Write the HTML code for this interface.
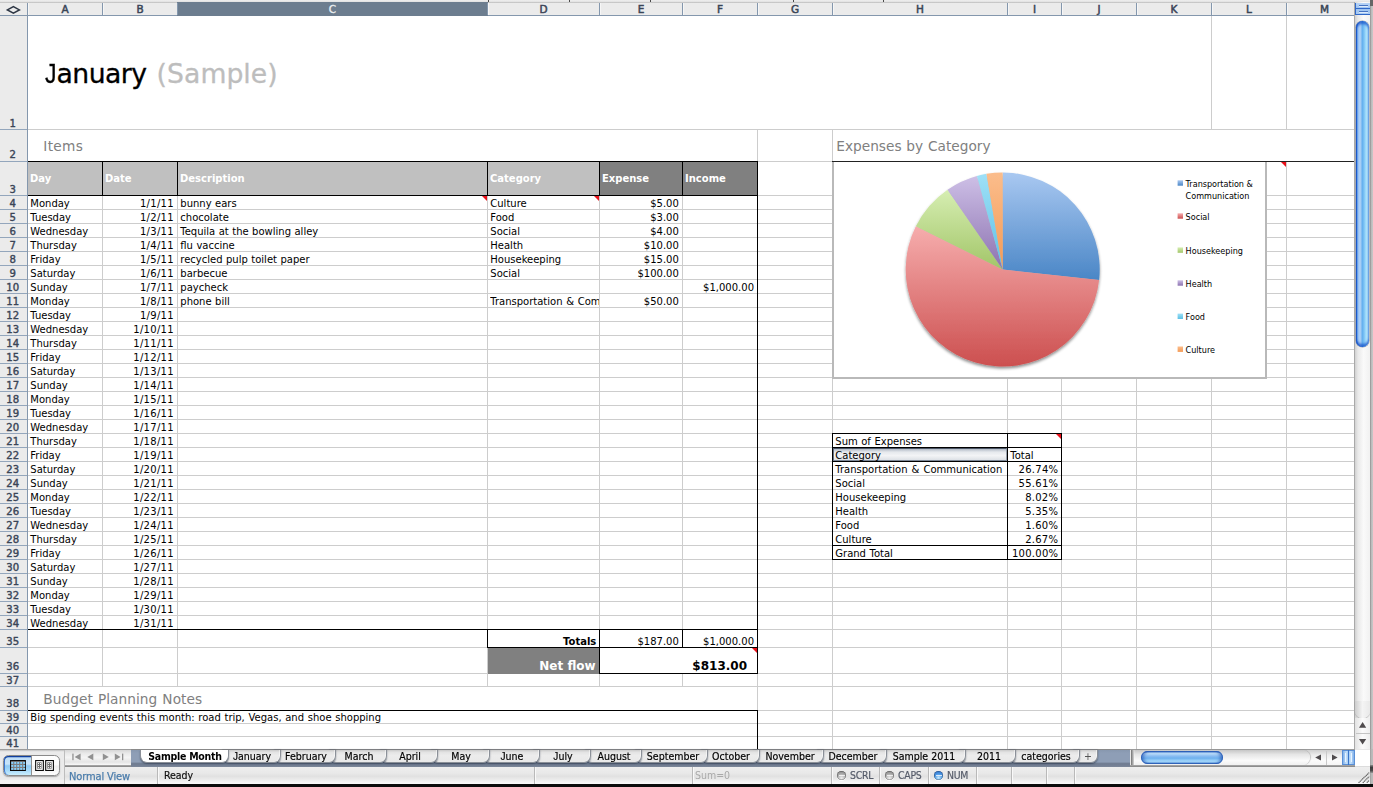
<!DOCTYPE html>
<html lang="en"><head><meta charset="utf-8"><title>January (Sample)</title>
<style>
html,body{margin:0;padding:0;background:#fff;}
#app{position:relative;width:1373px;height:787px;overflow:hidden;background:#fff;}
#app div,#app span.t,#app svg{position:absolute;}
.t{white-space:nowrap;display:block;}
.v{font-family:"DejaVu Sans","Liberation Sans",sans-serif;}
.l{font-family:"Liberation Sans","DejaVu Sans",sans-serif;}
</style></head><body><div id="app">

<!-- gridlines -->
<div style="left:28px;top:129px;width:1326px;height:1px;background:#cdcdcd;"></div>
<div style="left:28px;top:161px;width:1326px;height:1px;background:#cdcdcd;"></div>
<div style="left:28px;top:195px;width:1326px;height:1px;background:#cdcdcd;"></div>
<div style="left:28px;top:209px;width:1326px;height:1px;background:#cdcdcd;"></div>
<div style="left:28px;top:223px;width:1326px;height:1px;background:#cdcdcd;"></div>
<div style="left:28px;top:237px;width:1326px;height:1px;background:#cdcdcd;"></div>
<div style="left:28px;top:251px;width:1326px;height:1px;background:#cdcdcd;"></div>
<div style="left:28px;top:265px;width:1326px;height:1px;background:#cdcdcd;"></div>
<div style="left:28px;top:279px;width:1326px;height:1px;background:#cdcdcd;"></div>
<div style="left:28px;top:293px;width:1326px;height:1px;background:#cdcdcd;"></div>
<div style="left:28px;top:307px;width:1326px;height:1px;background:#cdcdcd;"></div>
<div style="left:28px;top:321px;width:1326px;height:1px;background:#cdcdcd;"></div>
<div style="left:28px;top:335px;width:1326px;height:1px;background:#cdcdcd;"></div>
<div style="left:28px;top:349px;width:1326px;height:1px;background:#cdcdcd;"></div>
<div style="left:28px;top:363px;width:1326px;height:1px;background:#cdcdcd;"></div>
<div style="left:28px;top:377px;width:1326px;height:1px;background:#cdcdcd;"></div>
<div style="left:28px;top:391px;width:1326px;height:1px;background:#cdcdcd;"></div>
<div style="left:28px;top:405px;width:1326px;height:1px;background:#cdcdcd;"></div>
<div style="left:28px;top:419px;width:1326px;height:1px;background:#cdcdcd;"></div>
<div style="left:28px;top:433px;width:1326px;height:1px;background:#cdcdcd;"></div>
<div style="left:28px;top:447px;width:1326px;height:1px;background:#cdcdcd;"></div>
<div style="left:28px;top:461px;width:1326px;height:1px;background:#cdcdcd;"></div>
<div style="left:28px;top:475px;width:1326px;height:1px;background:#cdcdcd;"></div>
<div style="left:28px;top:489px;width:1326px;height:1px;background:#cdcdcd;"></div>
<div style="left:28px;top:503px;width:1326px;height:1px;background:#cdcdcd;"></div>
<div style="left:28px;top:517px;width:1326px;height:1px;background:#cdcdcd;"></div>
<div style="left:28px;top:531px;width:1326px;height:1px;background:#cdcdcd;"></div>
<div style="left:28px;top:545px;width:1326px;height:1px;background:#cdcdcd;"></div>
<div style="left:28px;top:559px;width:1326px;height:1px;background:#cdcdcd;"></div>
<div style="left:28px;top:573px;width:1326px;height:1px;background:#cdcdcd;"></div>
<div style="left:28px;top:587px;width:1326px;height:1px;background:#cdcdcd;"></div>
<div style="left:28px;top:601px;width:1326px;height:1px;background:#cdcdcd;"></div>
<div style="left:28px;top:615px;width:1326px;height:1px;background:#cdcdcd;"></div>
<div style="left:28px;top:629px;width:1326px;height:1px;background:#cdcdcd;"></div>
<div style="left:28px;top:647px;width:1326px;height:1px;background:#cdcdcd;"></div>
<div style="left:28px;top:673px;width:1326px;height:1px;background:#cdcdcd;"></div>
<div style="left:28px;top:686px;width:1326px;height:1px;background:#cdcdcd;"></div>
<div style="left:28px;top:710px;width:1326px;height:1px;background:#cdcdcd;"></div>
<div style="left:28px;top:723px;width:1326px;height:1px;background:#cdcdcd;"></div>
<div style="left:28px;top:736px;width:1326px;height:1px;background:#cdcdcd;"></div>
<div style="left:28px;top:749px;width:1326px;height:1px;background:#cdcdcd;"></div>
<div style="left:102px;top:16px;width:1px;height:733px;background:#cdcdcd;"></div>
<div style="left:177px;top:16px;width:1px;height:733px;background:#cdcdcd;"></div>
<div style="left:487px;top:16px;width:1px;height:733px;background:#cdcdcd;"></div>
<div style="left:599px;top:16px;width:1px;height:733px;background:#cdcdcd;"></div>
<div style="left:682px;top:16px;width:1px;height:733px;background:#cdcdcd;"></div>
<div style="left:757px;top:16px;width:1px;height:733px;background:#cdcdcd;"></div>
<div style="left:832px;top:16px;width:1px;height:733px;background:#cdcdcd;"></div>
<div style="left:1007px;top:16px;width:1px;height:733px;background:#cdcdcd;"></div>
<div style="left:1061px;top:16px;width:1px;height:733px;background:#cdcdcd;"></div>
<div style="left:1136px;top:16px;width:1px;height:733px;background:#cdcdcd;"></div>
<div style="left:1211px;top:16px;width:1px;height:733px;background:#cdcdcd;"></div>
<div style="left:1286px;top:16px;width:1px;height:733px;background:#cdcdcd;"></div>
<div style="left:28px;top:16px;width:1183px;height:113px;background:#fff;"></div>
<div style="left:28px;top:130px;width:729px;height:31px;background:#fff;"></div>
<div style="left:833px;top:130px;width:521px;height:31px;background:#fff;"></div>
<div style="left:28px;top:687px;width:729px;height:23px;background:#fff;"></div>
<div style="left:28px;top:711px;width:729px;height:12px;background:#fff;"></div>
<div style="left:28px;top:724px;width:729px;height:12px;background:#fff;"></div>
<div style="left:28px;top:737px;width:729px;height:12px;background:#fff;"></div>
<!-- header row -->
<div style="left:28px;top:162px;width:571px;height:33px;background:#c0c0c0;"></div>
<div style="left:600px;top:162px;width:157px;height:33px;background:#808080;"></div>
<div style="left:27px;top:161px;width:731px;height:1px;background:#000;"></div>
<div style="left:27px;top:195px;width:731px;height:1px;background:#000;"></div>
<div style="left:102px;top:161px;width:1px;height:35px;background:#000;"></div>
<div style="left:177px;top:161px;width:1px;height:35px;background:#000;"></div>
<div style="left:487px;top:161px;width:1px;height:35px;background:#000;"></div>
<div style="left:599px;top:161px;width:1px;height:35px;background:#000;"></div>
<div style="left:682px;top:161px;width:1px;height:35px;background:#000;"></div>
<div style="left:757px;top:161px;width:1px;height:35px;background:#000;"></div>
<div style="left:757px;top:195px;width:1px;height:479px;background:#000;"></div>
<div style="left:27px;top:629px;width:731px;height:1px;background:#000;"></div>
<div style="left:487px;top:629px;width:1px;height:19px;background:#000;"></div>
<div style="left:599px;top:629px;width:1px;height:45px;background:#000;"></div>
<div style="left:682px;top:629px;width:1px;height:19px;background:#000;"></div>
<div style="left:487px;top:647px;width:271px;height:1px;background:#000;"></div>
<div style="left:599px;top:673px;width:159px;height:1px;background:#000;"></div>
<div style="left:488px;top:648px;width:111px;height:26px;background:#808080;"></div>
<div style="left:600px;top:648px;width:157px;height:25px;background:#fff;"></div>
<div style="left:27px;top:710px;width:731px;height:1px;background:#000;"></div>
<div style="left:757px;top:710px;width:1px;height:39px;background:#000;"></div>
<div style="left:832px;top:161px;width:522px;height:1px;background:#222;"></div>
<span class="t v" style="top:171.75px;font-size:10px;line-height:14px;color:#fff;font-weight:bold;left:30px;">Day</span>
<span class="t v" style="top:171.75px;font-size:10px;line-height:14px;color:#fff;font-weight:bold;left:105px;">Date</span>
<span class="t v" style="top:171.75px;font-size:10px;line-height:14px;color:#fff;font-weight:bold;left:180px;">Description</span>
<span class="t v" style="top:171.75px;font-size:10px;line-height:14px;color:#fff;font-weight:bold;left:490px;">Category</span>
<span class="t v" style="top:171.75px;font-size:10px;line-height:14px;color:#fff;font-weight:bold;left:602px;">Expense</span>
<span class="t v" style="top:171.75px;font-size:10px;line-height:14px;color:#fff;font-weight:bold;left:685px;">Income</span>
<!-- data -->
<span class="t v" style="top:196.75px;font-size:10px;line-height:14px;color:#000;left:30.3px;">Monday</span>
<span class="t v" style="top:196.75px;font-size:10px;line-height:14px;color:#000;right:1199.4px;letter-spacing:0.3px;margin-right:-0.3px;">1/1/11</span>
<span class="t v" style="top:196.75px;font-size:10px;line-height:14px;color:#000;left:180.3px;word-spacing:0.3px;">bunny ears</span>
<span class="t v" style="top:196.75px;font-size:10px;line-height:14px;color:#000;left:490.3px;width:108.69999999999999px;overflow:hidden;word-spacing:0.5px;">Culture</span>
<span class="t v" style="top:196.75px;font-size:10px;line-height:14px;color:#000;right:694.2px;">$5.00</span>
<span class="t v" style="top:210.75px;font-size:10px;line-height:14px;color:#000;left:30.3px;">Tuesday</span>
<span class="t v" style="top:210.75px;font-size:10px;line-height:14px;color:#000;right:1199.4px;letter-spacing:0.3px;margin-right:-0.3px;">1/2/11</span>
<span class="t v" style="top:210.75px;font-size:10px;line-height:14px;color:#000;left:180.3px;word-spacing:0.3px;">chocolate</span>
<span class="t v" style="top:210.75px;font-size:10px;line-height:14px;color:#000;left:490.3px;width:108.69999999999999px;overflow:hidden;word-spacing:0.5px;">Food</span>
<span class="t v" style="top:210.75px;font-size:10px;line-height:14px;color:#000;right:694.2px;">$3.00</span>
<span class="t v" style="top:224.75px;font-size:10px;line-height:14px;color:#000;left:30.3px;">Wednesday</span>
<span class="t v" style="top:224.75px;font-size:10px;line-height:14px;color:#000;right:1199.4px;letter-spacing:0.3px;margin-right:-0.3px;">1/3/11</span>
<span class="t v" style="top:224.75px;font-size:10px;line-height:14px;color:#000;left:180.3px;word-spacing:0.3px;">Tequila at the bowling alley</span>
<span class="t v" style="top:224.75px;font-size:10px;line-height:14px;color:#000;left:490.3px;width:108.69999999999999px;overflow:hidden;word-spacing:0.5px;">Social</span>
<span class="t v" style="top:224.75px;font-size:10px;line-height:14px;color:#000;right:694.2px;">$4.00</span>
<span class="t v" style="top:238.75px;font-size:10px;line-height:14px;color:#000;left:30.3px;">Thursday</span>
<span class="t v" style="top:238.75px;font-size:10px;line-height:14px;color:#000;right:1199.4px;letter-spacing:0.3px;margin-right:-0.3px;">1/4/11</span>
<span class="t v" style="top:238.75px;font-size:10px;line-height:14px;color:#000;left:180.3px;word-spacing:0.3px;">flu vaccine</span>
<span class="t v" style="top:238.75px;font-size:10px;line-height:14px;color:#000;left:490.3px;width:108.69999999999999px;overflow:hidden;word-spacing:0.5px;">Health</span>
<span class="t v" style="top:238.75px;font-size:10px;line-height:14px;color:#000;right:694.2px;">$10.00</span>
<span class="t v" style="top:252.75px;font-size:10px;line-height:14px;color:#000;left:30.3px;">Friday</span>
<span class="t v" style="top:252.75px;font-size:10px;line-height:14px;color:#000;right:1199.4px;letter-spacing:0.3px;margin-right:-0.3px;">1/5/11</span>
<span class="t v" style="top:252.75px;font-size:10px;line-height:14px;color:#000;left:180.3px;word-spacing:0.3px;">recycled pulp toilet paper</span>
<span class="t v" style="top:252.75px;font-size:10px;line-height:14px;color:#000;left:490.3px;width:108.69999999999999px;overflow:hidden;word-spacing:0.5px;">Housekeeping</span>
<span class="t v" style="top:252.75px;font-size:10px;line-height:14px;color:#000;right:694.2px;">$15.00</span>
<span class="t v" style="top:266.75px;font-size:10px;line-height:14px;color:#000;left:30.3px;">Saturday</span>
<span class="t v" style="top:266.75px;font-size:10px;line-height:14px;color:#000;right:1199.4px;letter-spacing:0.3px;margin-right:-0.3px;">1/6/11</span>
<span class="t v" style="top:266.75px;font-size:10px;line-height:14px;color:#000;left:180.3px;word-spacing:0.3px;">barbecue</span>
<span class="t v" style="top:266.75px;font-size:10px;line-height:14px;color:#000;left:490.3px;width:108.69999999999999px;overflow:hidden;word-spacing:0.5px;">Social</span>
<span class="t v" style="top:266.75px;font-size:10px;line-height:14px;color:#000;right:694.2px;">$100.00</span>
<span class="t v" style="top:280.75px;font-size:10px;line-height:14px;color:#000;left:30.3px;">Sunday</span>
<span class="t v" style="top:280.75px;font-size:10px;line-height:14px;color:#000;right:1199.4px;letter-spacing:0.3px;margin-right:-0.3px;">1/7/11</span>
<span class="t v" style="top:280.75px;font-size:10px;line-height:14px;color:#000;left:180.3px;word-spacing:0.3px;">paycheck</span>
<span class="t v" style="top:280.75px;font-size:10px;line-height:14px;color:#000;right:619px;">$1,000.00</span>
<span class="t v" style="top:294.75px;font-size:10px;line-height:14px;color:#000;left:30.3px;">Monday</span>
<span class="t v" style="top:294.75px;font-size:10px;line-height:14px;color:#000;right:1199.4px;letter-spacing:0.3px;margin-right:-0.3px;">1/8/11</span>
<span class="t v" style="top:294.75px;font-size:10px;line-height:14px;color:#000;left:180.3px;word-spacing:0.3px;">phone bill</span>
<span class="t v" style="top:294.75px;font-size:10px;line-height:14px;color:#000;left:490.3px;width:108.69999999999999px;overflow:hidden;word-spacing:0.5px;">Transportation &amp; Communication</span>
<span class="t v" style="top:294.75px;font-size:10px;line-height:14px;color:#000;right:694.2px;">$50.00</span>
<span class="t v" style="top:308.75px;font-size:10px;line-height:14px;color:#000;left:30.3px;">Tuesday</span>
<span class="t v" style="top:308.75px;font-size:10px;line-height:14px;color:#000;right:1199.4px;letter-spacing:0.3px;margin-right:-0.3px;">1/9/11</span>
<span class="t v" style="top:322.75px;font-size:10px;line-height:14px;color:#000;left:30.3px;">Wednesday</span>
<span class="t v" style="top:322.75px;font-size:10px;line-height:14px;color:#000;right:1199.4px;letter-spacing:0.3px;margin-right:-0.3px;">1/10/11</span>
<span class="t v" style="top:336.75px;font-size:10px;line-height:14px;color:#000;left:30.3px;">Thursday</span>
<span class="t v" style="top:336.75px;font-size:10px;line-height:14px;color:#000;right:1199.4px;letter-spacing:0.3px;margin-right:-0.3px;">1/11/11</span>
<span class="t v" style="top:350.75px;font-size:10px;line-height:14px;color:#000;left:30.3px;">Friday</span>
<span class="t v" style="top:350.75px;font-size:10px;line-height:14px;color:#000;right:1199.4px;letter-spacing:0.3px;margin-right:-0.3px;">1/12/11</span>
<span class="t v" style="top:364.75px;font-size:10px;line-height:14px;color:#000;left:30.3px;">Saturday</span>
<span class="t v" style="top:364.75px;font-size:10px;line-height:14px;color:#000;right:1199.4px;letter-spacing:0.3px;margin-right:-0.3px;">1/13/11</span>
<span class="t v" style="top:378.75px;font-size:10px;line-height:14px;color:#000;left:30.3px;">Sunday</span>
<span class="t v" style="top:378.75px;font-size:10px;line-height:14px;color:#000;right:1199.4px;letter-spacing:0.3px;margin-right:-0.3px;">1/14/11</span>
<span class="t v" style="top:392.75px;font-size:10px;line-height:14px;color:#000;left:30.3px;">Monday</span>
<span class="t v" style="top:392.75px;font-size:10px;line-height:14px;color:#000;right:1199.4px;letter-spacing:0.3px;margin-right:-0.3px;">1/15/11</span>
<span class="t v" style="top:406.75px;font-size:10px;line-height:14px;color:#000;left:30.3px;">Tuesday</span>
<span class="t v" style="top:406.75px;font-size:10px;line-height:14px;color:#000;right:1199.4px;letter-spacing:0.3px;margin-right:-0.3px;">1/16/11</span>
<span class="t v" style="top:420.75px;font-size:10px;line-height:14px;color:#000;left:30.3px;">Wednesday</span>
<span class="t v" style="top:420.75px;font-size:10px;line-height:14px;color:#000;right:1199.4px;letter-spacing:0.3px;margin-right:-0.3px;">1/17/11</span>
<span class="t v" style="top:434.75px;font-size:10px;line-height:14px;color:#000;left:30.3px;">Thursday</span>
<span class="t v" style="top:434.75px;font-size:10px;line-height:14px;color:#000;right:1199.4px;letter-spacing:0.3px;margin-right:-0.3px;">1/18/11</span>
<span class="t v" style="top:448.75px;font-size:10px;line-height:14px;color:#000;left:30.3px;">Friday</span>
<span class="t v" style="top:448.75px;font-size:10px;line-height:14px;color:#000;right:1199.4px;letter-spacing:0.3px;margin-right:-0.3px;">1/19/11</span>
<span class="t v" style="top:462.75px;font-size:10px;line-height:14px;color:#000;left:30.3px;">Saturday</span>
<span class="t v" style="top:462.75px;font-size:10px;line-height:14px;color:#000;right:1199.4px;letter-spacing:0.3px;margin-right:-0.3px;">1/20/11</span>
<span class="t v" style="top:476.75px;font-size:10px;line-height:14px;color:#000;left:30.3px;">Sunday</span>
<span class="t v" style="top:476.75px;font-size:10px;line-height:14px;color:#000;right:1199.4px;letter-spacing:0.3px;margin-right:-0.3px;">1/21/11</span>
<span class="t v" style="top:490.75px;font-size:10px;line-height:14px;color:#000;left:30.3px;">Monday</span>
<span class="t v" style="top:490.75px;font-size:10px;line-height:14px;color:#000;right:1199.4px;letter-spacing:0.3px;margin-right:-0.3px;">1/22/11</span>
<span class="t v" style="top:504.75px;font-size:10px;line-height:14px;color:#000;left:30.3px;">Tuesday</span>
<span class="t v" style="top:504.75px;font-size:10px;line-height:14px;color:#000;right:1199.4px;letter-spacing:0.3px;margin-right:-0.3px;">1/23/11</span>
<span class="t v" style="top:518.75px;font-size:10px;line-height:14px;color:#000;left:30.3px;">Wednesday</span>
<span class="t v" style="top:518.75px;font-size:10px;line-height:14px;color:#000;right:1199.4px;letter-spacing:0.3px;margin-right:-0.3px;">1/24/11</span>
<span class="t v" style="top:532.75px;font-size:10px;line-height:14px;color:#000;left:30.3px;">Thursday</span>
<span class="t v" style="top:532.75px;font-size:10px;line-height:14px;color:#000;right:1199.4px;letter-spacing:0.3px;margin-right:-0.3px;">1/25/11</span>
<span class="t v" style="top:546.75px;font-size:10px;line-height:14px;color:#000;left:30.3px;">Friday</span>
<span class="t v" style="top:546.75px;font-size:10px;line-height:14px;color:#000;right:1199.4px;letter-spacing:0.3px;margin-right:-0.3px;">1/26/11</span>
<span class="t v" style="top:560.75px;font-size:10px;line-height:14px;color:#000;left:30.3px;">Saturday</span>
<span class="t v" style="top:560.75px;font-size:10px;line-height:14px;color:#000;right:1199.4px;letter-spacing:0.3px;margin-right:-0.3px;">1/27/11</span>
<span class="t v" style="top:574.75px;font-size:10px;line-height:14px;color:#000;left:30.3px;">Sunday</span>
<span class="t v" style="top:574.75px;font-size:10px;line-height:14px;color:#000;right:1199.4px;letter-spacing:0.3px;margin-right:-0.3px;">1/28/11</span>
<span class="t v" style="top:588.75px;font-size:10px;line-height:14px;color:#000;left:30.3px;">Monday</span>
<span class="t v" style="top:588.75px;font-size:10px;line-height:14px;color:#000;right:1199.4px;letter-spacing:0.3px;margin-right:-0.3px;">1/29/11</span>
<span class="t v" style="top:602.75px;font-size:10px;line-height:14px;color:#000;left:30.3px;">Tuesday</span>
<span class="t v" style="top:602.75px;font-size:10px;line-height:14px;color:#000;right:1199.4px;letter-spacing:0.3px;margin-right:-0.3px;">1/30/11</span>
<span class="t v" style="top:616.75px;font-size:10px;line-height:14px;color:#000;left:30.3px;">Wednesday</span>
<span class="t v" style="top:616.75px;font-size:10px;line-height:14px;color:#000;right:1199.4px;letter-spacing:0.3px;margin-right:-0.3px;">1/31/11</span>
<span class="t v" style="top:634.75px;font-size:10px;line-height:14px;color:#000;font-weight:bold;right:776.7px;">Totals</span>
<span class="t v" style="top:634.75px;font-size:10px;line-height:14px;color:#000;right:694.2px;">$187.00</span>
<span class="t v" style="top:634.75px;font-size:10px;line-height:14px;color:#000;right:619px;">$1,000.00</span>
<span class="t v" style="top:657.75px;font-size:12px;line-height:17px;color:#fff;font-weight:bold;right:777.4px;">Net flow</span>
<span class="t v" style="top:657.75px;font-size:12px;line-height:17px;color:#000;font-weight:bold;right:626px;">$813.00</span>
<span class="t v" style="top:55.75px;font-size:26.67px;line-height:36px;color:#000;left:44.6px;-webkit-text-stroke:0.3px #000;"><span class="l" style="display:inline-block;font-size:27.3px;line-height:0;transform:scaleX(0.84);transform-origin:0 100%;margin-right:-1.85px;">J</span><span style="letter-spacing:-0.5px;">anuary </span><span style="color:#bdbdbd;-webkit-text-stroke-color:#bdbdbd;letter-spacing:0.05px;margin-left:2px;">(Sample)</span></span>
<span class="t v" style="top:136.75px;font-size:13.7px;line-height:19px;color:#808080;left:43.3px;letter-spacing:0.3px;">Items</span>
<span class="t v" style="top:136.75px;font-size:13.7px;line-height:19px;color:#808080;left:836.3px;word-spacing:0.5px;">Expenses by Category</span>
<span class="t v" style="top:689.75px;font-size:13.7px;line-height:19px;color:#808080;left:43.3px;word-spacing:0.6px;letter-spacing:0.06px;">Budget Planning Notes</span>
<span class="t v" style="top:710.75px;font-size:10px;line-height:14px;color:#000;left:30.3px;word-spacing:0.5px;">Big spending events this month: road trip, Vegas, and shoe shopping</span>
<svg style="left:482px;top:196px" width="5" height="5"><polygon points="0,0 5,0 5,5" fill="#e8111a"/></svg>
<svg style="left:594px;top:196px" width="5" height="5"><polygon points="0,0 5,0 5,5" fill="#e8111a"/></svg>
<svg style="left:751.5px;top:648px" width="5.5" height="5.5"><polygon points="0,0 5.5,0 5.5,5.5" fill="#e8111a"/></svg>
<svg style="left:1280.5px;top:162px" width="5.5" height="5.5"><polygon points="0,0 5.5,0 5.5,5.5" fill="#e8111a"/></svg>
<svg style="left:1055.5px;top:434px" width="5.5" height="5.5"><polygon points="0,0 5.5,0 5.5,5.5" fill="#e8111a"/></svg>
<!-- chart -->
<div style="left:832px;top:162px;width:435px;height:217px;background:#fff;box-sizing:border-box;border-left:2px solid #b9b9b9;border-right:2px solid #b9b9b9;border-bottom:2px solid #b9b9b9;"></div>
<svg style="left:832px;top:162px" width="435" height="216" viewBox="832 162 435 216"><defs><linearGradient id="g0" x1="0" y1="0" x2="0" y2="1"><stop offset="0" stop-color="#a9c8f1"/><stop offset="1" stop-color="#4a86c6"/></linearGradient><linearGradient id="g1" x1="0" y1="0" x2="0" y2="1"><stop offset="0" stop-color="#f6adad"/><stop offset="1" stop-color="#cc4f4f"/></linearGradient><linearGradient id="g2" x1="0" y1="0" x2="0" y2="1"><stop offset="0" stop-color="#d6eeb2"/><stop offset="1" stop-color="#a2c568"/></linearGradient><linearGradient id="g3" x1="0" y1="0" x2="0" y2="1"><stop offset="0" stop-color="#cdbfe6"/><stop offset="1" stop-color="#8c72b0"/></linearGradient><linearGradient id="g4" x1="0" y1="0" x2="0" y2="1"><stop offset="0" stop-color="#9fe0f7"/><stop offset="1" stop-color="#5cc0e4"/></linearGradient><linearGradient id="g5" x1="0" y1="0" x2="0" y2="1"><stop offset="0" stop-color="#fbbd8c"/><stop offset="1" stop-color="#f49a55"/></linearGradient><filter id="sh" x="-10%" y="-10%" width="120%" height="125%"><feGaussianBlur in="SourceAlpha" stdDeviation="1.6"/><feOffset dx="0" dy="1.5"/><feComponentTransfer><feFuncA type="linear" slope="0.45"/></feComponentTransfer><feMerge><feMergeNode/><feMergeNode in="SourceGraphic"/></feMerge></filter></defs><g filter="url(#sh)"><path d="M1002.7,269.5 L1002.70,172.50 A97,97 0 0 1 1099.12,280.08 Z" fill="url(#g0)"/><path d="M1002.7,269.5 L1099.12,280.08 A97,97 0 1 1 915.86,226.28 Z" fill="url(#g1)"/><path d="M1002.7,269.5 L915.86,226.28 A97,97 0 0 1 947.52,189.72 Z" fill="url(#g2)"/><path d="M1002.7,269.5 L947.52,189.72 A97,97 0 0 1 976.93,175.99 Z" fill="url(#g3)"/><path d="M1002.7,269.5 L976.93,175.99 A97,97 0 0 1 986.44,173.87 Z" fill="url(#g4)"/><path d="M1002.7,269.5 L986.44,173.87 A97,97 0 0 1 1002.64,172.50 Z" fill="url(#g5)"/></g><rect x="1177.6" y="180.3" width="5.4" height="5.4" fill="url(#g0)"/><text transform="translate(1185.6 186.6) scale(0.9 1)" font-size="9" fill="#000" font-family="'DejaVu Sans','Liberation Sans',sans-serif">Transportation &amp;</text><text transform="translate(1185.6 198.8) scale(0.9 1)" font-size="9" fill="#000" font-family="'DejaVu Sans','Liberation Sans',sans-serif">Communication</text><rect x="1177.6" y="213.3" width="5.4" height="5.4" fill="url(#g1)"/><text transform="translate(1185.6 219.6) scale(0.9 1)" font-size="9" fill="#000" font-family="'DejaVu Sans','Liberation Sans',sans-serif">Social</text><rect x="1177.6" y="247.4" width="5.4" height="5.4" fill="url(#g2)"/><text transform="translate(1185.6 253.7) scale(0.9 1)" font-size="9" fill="#000" font-family="'DejaVu Sans','Liberation Sans',sans-serif">Housekeeping</text><rect x="1177.6" y="280.3" width="5.4" height="5.4" fill="url(#g3)"/><text transform="translate(1185.6 286.6) scale(0.9 1)" font-size="9" fill="#000" font-family="'DejaVu Sans','Liberation Sans',sans-serif">Health</text><rect x="1177.6" y="313.6" width="5.4" height="5.4" fill="url(#g4)"/><text transform="translate(1185.6 319.9) scale(0.9 1)" font-size="9" fill="#000" font-family="'DejaVu Sans','Liberation Sans',sans-serif">Food</text><rect x="1177.6" y="346.5" width="5.4" height="5.4" fill="url(#g5)"/><text transform="translate(1185.6 352.8) scale(0.9 1)" font-size="9" fill="#000" font-family="'DejaVu Sans','Liberation Sans',sans-serif">Culture</text></svg>
<!-- pivot -->
<div style="left:832px;top:433px;width:230px;height:1px;background:#000;"></div>
<div style="left:832px;top:447px;width:230px;height:1px;background:#000;"></div>
<div style="left:832px;top:461px;width:230px;height:1px;background:#000;"></div>
<div style="left:832px;top:545px;width:230px;height:1px;background:#000;"></div>
<div style="left:832px;top:559px;width:230px;height:1px;background:#000;"></div>
<div style="left:832px;top:433px;width:1px;height:127px;background:#000;"></div>
<div style="left:1061px;top:433px;width:1px;height:127px;background:#000;"></div>
<div style="left:1007px;top:433px;width:1px;height:127px;background:#000;"></div>
<div style="left:833px;top:448px;width:174px;height:13px;background:linear-gradient(#b3bbc7 0,#e6e9ed 28%,#f3f4f6 60%,#dde1e6 100%);box-sizing:border-box;border:1px solid;border-color:#4c5666 #98a1ad #7c8796 #687486;"></div>
<span class="t v" style="top:434.75px;font-size:10px;line-height:14px;color:#000;left:835.3px;word-spacing:0.35px;">Sum of Expenses</span>
<span class="t v" style="top:448.75px;font-size:10px;line-height:14px;color:#000;left:835.3px;word-spacing:0.35px;">Category</span>
<span class="t v" style="top:448.75px;font-size:10px;line-height:14px;color:#000;left:1010.3px;">Total</span>
<span class="t v" style="top:462.75px;font-size:10px;line-height:14px;color:#000;left:835.3px;word-spacing:0.9px;">Transportation &amp; Communication</span>
<span class="t v" style="top:462.75px;font-size:10px;line-height:14px;color:#000;right:315px;letter-spacing:0.25px;margin-right:-0.25px;">26.74%</span>
<span class="t v" style="top:476.75px;font-size:10px;line-height:14px;color:#000;left:835.3px;word-spacing:0.35px;">Social</span>
<span class="t v" style="top:476.75px;font-size:10px;line-height:14px;color:#000;right:315px;letter-spacing:0.25px;margin-right:-0.25px;">55.61%</span>
<span class="t v" style="top:490.75px;font-size:10px;line-height:14px;color:#000;left:835.3px;word-spacing:0.35px;">Housekeeping</span>
<span class="t v" style="top:490.75px;font-size:10px;line-height:14px;color:#000;right:315px;letter-spacing:0.25px;margin-right:-0.25px;">8.02%</span>
<span class="t v" style="top:504.75px;font-size:10px;line-height:14px;color:#000;left:835.3px;word-spacing:0.35px;">Health</span>
<span class="t v" style="top:504.75px;font-size:10px;line-height:14px;color:#000;right:315px;letter-spacing:0.25px;margin-right:-0.25px;">5.35%</span>
<span class="t v" style="top:518.75px;font-size:10px;line-height:14px;color:#000;left:835.3px;word-spacing:0.35px;">Food</span>
<span class="t v" style="top:518.75px;font-size:10px;line-height:14px;color:#000;right:315px;letter-spacing:0.25px;margin-right:-0.25px;">1.60%</span>
<span class="t v" style="top:532.75px;font-size:10px;line-height:14px;color:#000;left:835.3px;word-spacing:0.35px;">Culture</span>
<span class="t v" style="top:532.75px;font-size:10px;line-height:14px;color:#000;right:315px;letter-spacing:0.25px;margin-right:-0.25px;">2.67%</span>
<span class="t v" style="top:546.75px;font-size:10px;line-height:14px;color:#000;left:835.3px;word-spacing:0.35px;">Grand Total</span>
<span class="t v" style="top:546.75px;font-size:10px;line-height:14px;color:#000;right:315px;letter-spacing:0.25px;margin-right:-0.25px;">100.00%</span>
<!-- headers -->
<div style="left:0px;top:16px;width:27px;height:733px;background:#ebebeb;"></div>
<div style="left:27px;top:2px;width:1px;height:747px;background:#8497ad;"></div>
<div style="left:0px;top:129px;width:27px;height:1px;background:#93a6bc;"></div>
<span class="t v" style="top:116.75px;font-size:10.1px;line-height:14px;color:#3a4557;left:-187.3px;width:400px;text-align:center;-webkit-text-stroke:0.4px #3a4557;">1</span>
<div style="left:0px;top:161px;width:27px;height:1px;background:#93a6bc;"></div>
<span class="t v" style="top:147.75px;font-size:10.1px;line-height:14px;color:#3a4557;left:-187.3px;width:400px;text-align:center;-webkit-text-stroke:0.4px #3a4557;">2</span>
<div style="left:0px;top:195px;width:27px;height:1px;background:#93a6bc;"></div>
<span class="t v" style="top:182.75px;font-size:10.1px;line-height:14px;color:#3a4557;left:-187.3px;width:400px;text-align:center;-webkit-text-stroke:0.4px #3a4557;">3</span>
<div style="left:0px;top:209px;width:27px;height:1px;background:#93a6bc;"></div>
<span class="t v" style="top:196.75px;font-size:10.1px;line-height:14px;color:#3a4557;left:-187.3px;width:400px;text-align:center;-webkit-text-stroke:0.4px #3a4557;">4</span>
<div style="left:0px;top:223px;width:27px;height:1px;background:#93a6bc;"></div>
<span class="t v" style="top:210.75px;font-size:10.1px;line-height:14px;color:#3a4557;left:-187.3px;width:400px;text-align:center;-webkit-text-stroke:0.4px #3a4557;">5</span>
<div style="left:0px;top:237px;width:27px;height:1px;background:#93a6bc;"></div>
<span class="t v" style="top:224.75px;font-size:10.1px;line-height:14px;color:#3a4557;left:-187.3px;width:400px;text-align:center;-webkit-text-stroke:0.4px #3a4557;">6</span>
<div style="left:0px;top:251px;width:27px;height:1px;background:#93a6bc;"></div>
<span class="t v" style="top:238.75px;font-size:10.1px;line-height:14px;color:#3a4557;left:-187.3px;width:400px;text-align:center;-webkit-text-stroke:0.4px #3a4557;">7</span>
<div style="left:0px;top:265px;width:27px;height:1px;background:#93a6bc;"></div>
<span class="t v" style="top:252.75px;font-size:10.1px;line-height:14px;color:#3a4557;left:-187.3px;width:400px;text-align:center;-webkit-text-stroke:0.4px #3a4557;">8</span>
<div style="left:0px;top:279px;width:27px;height:1px;background:#93a6bc;"></div>
<span class="t v" style="top:266.75px;font-size:10.1px;line-height:14px;color:#3a4557;left:-187.3px;width:400px;text-align:center;-webkit-text-stroke:0.4px #3a4557;">9</span>
<div style="left:0px;top:293px;width:27px;height:1px;background:#93a6bc;"></div>
<span class="t v" style="top:280.75px;font-size:10.1px;line-height:14px;color:#3a4557;left:-187.3px;width:400px;text-align:center;-webkit-text-stroke:0.4px #3a4557;">10</span>
<div style="left:0px;top:307px;width:27px;height:1px;background:#93a6bc;"></div>
<span class="t v" style="top:294.75px;font-size:10.1px;line-height:14px;color:#3a4557;left:-187.3px;width:400px;text-align:center;-webkit-text-stroke:0.4px #3a4557;">11</span>
<div style="left:0px;top:321px;width:27px;height:1px;background:#93a6bc;"></div>
<span class="t v" style="top:308.75px;font-size:10.1px;line-height:14px;color:#3a4557;left:-187.3px;width:400px;text-align:center;-webkit-text-stroke:0.4px #3a4557;">12</span>
<div style="left:0px;top:335px;width:27px;height:1px;background:#93a6bc;"></div>
<span class="t v" style="top:322.75px;font-size:10.1px;line-height:14px;color:#3a4557;left:-187.3px;width:400px;text-align:center;-webkit-text-stroke:0.4px #3a4557;">13</span>
<div style="left:0px;top:349px;width:27px;height:1px;background:#93a6bc;"></div>
<span class="t v" style="top:336.75px;font-size:10.1px;line-height:14px;color:#3a4557;left:-187.3px;width:400px;text-align:center;-webkit-text-stroke:0.4px #3a4557;">14</span>
<div style="left:0px;top:363px;width:27px;height:1px;background:#93a6bc;"></div>
<span class="t v" style="top:350.75px;font-size:10.1px;line-height:14px;color:#3a4557;left:-187.3px;width:400px;text-align:center;-webkit-text-stroke:0.4px #3a4557;">15</span>
<div style="left:0px;top:377px;width:27px;height:1px;background:#93a6bc;"></div>
<span class="t v" style="top:364.75px;font-size:10.1px;line-height:14px;color:#3a4557;left:-187.3px;width:400px;text-align:center;-webkit-text-stroke:0.4px #3a4557;">16</span>
<div style="left:0px;top:391px;width:27px;height:1px;background:#93a6bc;"></div>
<span class="t v" style="top:378.75px;font-size:10.1px;line-height:14px;color:#3a4557;left:-187.3px;width:400px;text-align:center;-webkit-text-stroke:0.4px #3a4557;">17</span>
<div style="left:0px;top:405px;width:27px;height:1px;background:#93a6bc;"></div>
<span class="t v" style="top:392.75px;font-size:10.1px;line-height:14px;color:#3a4557;left:-187.3px;width:400px;text-align:center;-webkit-text-stroke:0.4px #3a4557;">18</span>
<div style="left:0px;top:419px;width:27px;height:1px;background:#93a6bc;"></div>
<span class="t v" style="top:406.75px;font-size:10.1px;line-height:14px;color:#3a4557;left:-187.3px;width:400px;text-align:center;-webkit-text-stroke:0.4px #3a4557;">19</span>
<div style="left:0px;top:433px;width:27px;height:1px;background:#93a6bc;"></div>
<span class="t v" style="top:420.75px;font-size:10.1px;line-height:14px;color:#3a4557;left:-187.3px;width:400px;text-align:center;-webkit-text-stroke:0.4px #3a4557;">20</span>
<div style="left:0px;top:447px;width:27px;height:1px;background:#93a6bc;"></div>
<span class="t v" style="top:434.75px;font-size:10.1px;line-height:14px;color:#3a4557;left:-187.3px;width:400px;text-align:center;-webkit-text-stroke:0.4px #3a4557;">21</span>
<div style="left:0px;top:461px;width:27px;height:1px;background:#93a6bc;"></div>
<span class="t v" style="top:448.75px;font-size:10.1px;line-height:14px;color:#3a4557;left:-187.3px;width:400px;text-align:center;-webkit-text-stroke:0.4px #3a4557;">22</span>
<div style="left:0px;top:475px;width:27px;height:1px;background:#93a6bc;"></div>
<span class="t v" style="top:462.75px;font-size:10.1px;line-height:14px;color:#3a4557;left:-187.3px;width:400px;text-align:center;-webkit-text-stroke:0.4px #3a4557;">23</span>
<div style="left:0px;top:489px;width:27px;height:1px;background:#93a6bc;"></div>
<span class="t v" style="top:476.75px;font-size:10.1px;line-height:14px;color:#3a4557;left:-187.3px;width:400px;text-align:center;-webkit-text-stroke:0.4px #3a4557;">24</span>
<div style="left:0px;top:503px;width:27px;height:1px;background:#93a6bc;"></div>
<span class="t v" style="top:490.75px;font-size:10.1px;line-height:14px;color:#3a4557;left:-187.3px;width:400px;text-align:center;-webkit-text-stroke:0.4px #3a4557;">25</span>
<div style="left:0px;top:517px;width:27px;height:1px;background:#93a6bc;"></div>
<span class="t v" style="top:504.75px;font-size:10.1px;line-height:14px;color:#3a4557;left:-187.3px;width:400px;text-align:center;-webkit-text-stroke:0.4px #3a4557;">26</span>
<div style="left:0px;top:531px;width:27px;height:1px;background:#93a6bc;"></div>
<span class="t v" style="top:518.75px;font-size:10.1px;line-height:14px;color:#3a4557;left:-187.3px;width:400px;text-align:center;-webkit-text-stroke:0.4px #3a4557;">27</span>
<div style="left:0px;top:545px;width:27px;height:1px;background:#93a6bc;"></div>
<span class="t v" style="top:532.75px;font-size:10.1px;line-height:14px;color:#3a4557;left:-187.3px;width:400px;text-align:center;-webkit-text-stroke:0.4px #3a4557;">28</span>
<div style="left:0px;top:559px;width:27px;height:1px;background:#93a6bc;"></div>
<span class="t v" style="top:546.75px;font-size:10.1px;line-height:14px;color:#3a4557;left:-187.3px;width:400px;text-align:center;-webkit-text-stroke:0.4px #3a4557;">29</span>
<div style="left:0px;top:573px;width:27px;height:1px;background:#93a6bc;"></div>
<span class="t v" style="top:560.75px;font-size:10.1px;line-height:14px;color:#3a4557;left:-187.3px;width:400px;text-align:center;-webkit-text-stroke:0.4px #3a4557;">30</span>
<div style="left:0px;top:587px;width:27px;height:1px;background:#93a6bc;"></div>
<span class="t v" style="top:574.75px;font-size:10.1px;line-height:14px;color:#3a4557;left:-187.3px;width:400px;text-align:center;-webkit-text-stroke:0.4px #3a4557;">31</span>
<div style="left:0px;top:601px;width:27px;height:1px;background:#93a6bc;"></div>
<span class="t v" style="top:588.75px;font-size:10.1px;line-height:14px;color:#3a4557;left:-187.3px;width:400px;text-align:center;-webkit-text-stroke:0.4px #3a4557;">32</span>
<div style="left:0px;top:615px;width:27px;height:1px;background:#93a6bc;"></div>
<span class="t v" style="top:602.75px;font-size:10.1px;line-height:14px;color:#3a4557;left:-187.3px;width:400px;text-align:center;-webkit-text-stroke:0.4px #3a4557;">33</span>
<div style="left:0px;top:629px;width:27px;height:1px;background:#93a6bc;"></div>
<span class="t v" style="top:616.75px;font-size:10.1px;line-height:14px;color:#3a4557;left:-187.3px;width:400px;text-align:center;-webkit-text-stroke:0.4px #3a4557;">34</span>
<div style="left:0px;top:647px;width:27px;height:1px;background:#93a6bc;"></div>
<span class="t v" style="top:634.75px;font-size:10.1px;line-height:14px;color:#3a4557;left:-187.3px;width:400px;text-align:center;-webkit-text-stroke:0.4px #3a4557;">35</span>
<div style="left:0px;top:673px;width:27px;height:1px;background:#93a6bc;"></div>
<span class="t v" style="top:659.75px;font-size:10.1px;line-height:14px;color:#3a4557;left:-187.3px;width:400px;text-align:center;-webkit-text-stroke:0.4px #3a4557;">36</span>
<div style="left:0px;top:686px;width:27px;height:1px;background:#93a6bc;"></div>
<span class="t v" style="top:673.75px;font-size:10.1px;line-height:14px;color:#3a4557;left:-187.3px;width:400px;text-align:center;-webkit-text-stroke:0.4px #3a4557;">37</span>
<div style="left:0px;top:710px;width:27px;height:1px;background:#93a6bc;"></div>
<span class="t v" style="top:696.75px;font-size:10.1px;line-height:14px;color:#3a4557;left:-187.3px;width:400px;text-align:center;-webkit-text-stroke:0.4px #3a4557;">38</span>
<div style="left:0px;top:723px;width:27px;height:1px;background:#93a6bc;"></div>
<span class="t v" style="top:710.75px;font-size:10.1px;line-height:14px;color:#3a4557;left:-187.3px;width:400px;text-align:center;-webkit-text-stroke:0.4px #3a4557;">39</span>
<div style="left:0px;top:736px;width:27px;height:1px;background:#93a6bc;"></div>
<span class="t v" style="top:723.75px;font-size:10.1px;line-height:14px;color:#3a4557;left:-187.3px;width:400px;text-align:center;-webkit-text-stroke:0.4px #3a4557;">40</span>
<div style="left:0px;top:749px;width:27px;height:1px;background:#93a6bc;"></div>
<span class="t v" style="top:736.75px;font-size:10.1px;line-height:14px;color:#3a4557;left:-187.3px;width:400px;text-align:center;-webkit-text-stroke:0.4px #3a4557;">41</span>
<div style="left:0px;top:0px;width:1373px;height:3px;background:linear-gradient(#efefef,#e2e2e2 60%,#b4b4b4);"></div>
<div style="left:0px;top:3px;width:1355px;height:12px;background:#ebebeb;"></div>
<div style="left:488px;top:0px;width:1px;height:2px;background:#4a4a4a;"></div>
<div style="left:569px;top:0px;width:1px;height:2px;background:#4a4a4a;"></div>
<div style="left:650px;top:0px;width:1px;height:2px;background:#4a4a4a;"></div>
<div style="left:793px;top:0px;width:1px;height:2px;background:#4a4a4a;"></div>
<div style="left:883px;top:0px;width:1px;height:2px;background:#4a4a4a;"></div>
<div style="left:0px;top:15px;width:1355px;height:1px;background:#8497ad;"></div>
<span class="t v" style="top:1.75px;font-size:10.5px;line-height:15px;color:#3a4557;left:-135.0px;width:400px;text-align:center;-webkit-text-stroke:0.5px #3a4557;">A</span>
<div style="left:27px;top:3px;width:1px;height:12px;background:#8497ad;"></div>
<div style="left:28px;top:3px;width:1px;height:12px;background:#f6f6f6;"></div>
<span class="t v" style="top:1.75px;font-size:10.5px;line-height:15px;color:#3a4557;left:-60.0px;width:400px;text-align:center;-webkit-text-stroke:0.5px #3a4557;">B</span>
<div style="left:102px;top:3px;width:1px;height:12px;background:#8497ad;"></div>
<div style="left:103px;top:3px;width:1px;height:12px;background:#f6f6f6;"></div>
<div style="left:177px;top:2px;width:311px;height:14px;background:#6c7d8f;"></div>
<span class="t v" style="top:1.75px;font-size:10.5px;line-height:15px;color:#eef0f2;left:132.5px;width:400px;text-align:center;-webkit-text-stroke:0.3px #eef0f2;">C</span>
<div style="left:177px;top:3px;width:1px;height:12px;background:#8497ad;"></div>
<span class="t v" style="top:1.75px;font-size:10.5px;line-height:15px;color:#3a4557;left:343.5px;width:400px;text-align:center;-webkit-text-stroke:0.5px #3a4557;">D</span>
<div style="left:487px;top:3px;width:1px;height:12px;background:#8497ad;"></div>
<div style="left:488px;top:3px;width:1px;height:12px;background:#f6f6f6;"></div>
<span class="t v" style="top:1.75px;font-size:10.5px;line-height:15px;color:#3a4557;left:441.0px;width:400px;text-align:center;-webkit-text-stroke:0.5px #3a4557;">E</span>
<div style="left:599px;top:3px;width:1px;height:12px;background:#8497ad;"></div>
<div style="left:600px;top:3px;width:1px;height:12px;background:#f6f6f6;"></div>
<span class="t v" style="top:1.75px;font-size:10.5px;line-height:15px;color:#3a4557;left:520.0px;width:400px;text-align:center;-webkit-text-stroke:0.5px #3a4557;">F</span>
<div style="left:682px;top:3px;width:1px;height:12px;background:#8497ad;"></div>
<div style="left:683px;top:3px;width:1px;height:12px;background:#f6f6f6;"></div>
<span class="t v" style="top:1.75px;font-size:10.5px;line-height:15px;color:#3a4557;left:595.0px;width:400px;text-align:center;-webkit-text-stroke:0.5px #3a4557;">G</span>
<div style="left:757px;top:3px;width:1px;height:12px;background:#8497ad;"></div>
<div style="left:758px;top:3px;width:1px;height:12px;background:#f6f6f6;"></div>
<span class="t v" style="top:1.75px;font-size:10.5px;line-height:15px;color:#3a4557;left:720.0px;width:400px;text-align:center;-webkit-text-stroke:0.5px #3a4557;">H</span>
<div style="left:832px;top:3px;width:1px;height:12px;background:#8497ad;"></div>
<div style="left:833px;top:3px;width:1px;height:12px;background:#f6f6f6;"></div>
<span class="t v" style="top:1.75px;font-size:10.5px;line-height:15px;color:#3a4557;left:834.5px;width:400px;text-align:center;-webkit-text-stroke:0.5px #3a4557;">I</span>
<div style="left:1007px;top:3px;width:1px;height:12px;background:#8497ad;"></div>
<div style="left:1008px;top:3px;width:1px;height:12px;background:#f6f6f6;"></div>
<span class="t v" style="top:1.75px;font-size:10.5px;line-height:15px;color:#3a4557;left:899.0px;width:400px;text-align:center;-webkit-text-stroke:0.5px #3a4557;">J</span>
<div style="left:1061px;top:3px;width:1px;height:12px;background:#8497ad;"></div>
<div style="left:1062px;top:3px;width:1px;height:12px;background:#f6f6f6;"></div>
<span class="t v" style="top:1.75px;font-size:10.5px;line-height:15px;color:#3a4557;left:974.0px;width:400px;text-align:center;-webkit-text-stroke:0.5px #3a4557;">K</span>
<div style="left:1136px;top:3px;width:1px;height:12px;background:#8497ad;"></div>
<div style="left:1137px;top:3px;width:1px;height:12px;background:#f6f6f6;"></div>
<span class="t v" style="top:1.75px;font-size:10.5px;line-height:15px;color:#3a4557;left:1049.0px;width:400px;text-align:center;-webkit-text-stroke:0.5px #3a4557;">L</span>
<div style="left:1211px;top:3px;width:1px;height:12px;background:#8497ad;"></div>
<div style="left:1212px;top:3px;width:1px;height:12px;background:#f6f6f6;"></div>
<span class="t v" style="top:1.75px;font-size:10.5px;line-height:15px;color:#3a4557;left:1124.5px;width:400px;text-align:center;-webkit-text-stroke:0.5px #3a4557;">M</span>
<div style="left:1286px;top:3px;width:1px;height:12px;background:#8497ad;"></div>
<div style="left:1287px;top:3px;width:1px;height:12px;background:#f6f6f6;"></div>
<div style="left:1354px;top:3px;width:1px;height:12px;background:#8497ad;"></div>
<svg style="left:5px;top:4px" width="17" height="11" viewBox="0 0 17 11"><polygon points="2.4,5.9 8.4,2.6 14.4,5.9 8.4,9.2" fill="none" stroke="#2d3644" stroke-width="1.5" stroke-linejoin="miter"/></svg>
<!-- vscroll -->
<div style="left:1354px;top:2px;width:16px;height:748px;background:linear-gradient(90deg,#c9c9c9 0,#e9e9e9 25%,#fafafa 60%,#f1f1f1 100%);"></div>
<div style="left:1354px;top:2px;width:1px;height:748px;background:#a9a9a9;"></div>
<div style="left:1355px;top:3px;width:15px;height:12px;background:linear-gradient(#b9d5f6,#9cc2f1 50%,#a9cbf3);box-sizing:border-box;border-left:1px solid #2f68c8;border-bottom:1px solid #2f68c8;"></div>
<div style="left:1355px;top:8px;width:15px;height:1px;background:#2f68c8;"></div>
<div style="left:1359px;top:5px;width:9px;height:1px;background:#4674c2;"></div>
<div style="left:1359px;top:6px;width:9px;height:1px;background:#dcebfc;"></div>
<div style="left:1359px;top:11px;width:9px;height:1px;background:#4674c2;"></div>
<div style="left:1359px;top:12px;width:9px;height:1px;background:#dcebfc;"></div>
<div style="left:1356px;top:21px;width:13px;height:326px;background:linear-gradient(90deg,#2a68d6 0,#6aa8f0 9%,#afd1f6 22%,#a6cdf5 36%,#62aeee 48%,#7cc3f5 62%,#b8ecff 84%,#a6daf7 100%);border-radius:6.5px;box-shadow:inset 1px 0 0 rgba(25,85,200,.9),inset 0 3px 2.5px rgba(20,80,200,.75),inset 0 -3px 2.5px rgba(20,80,200,.75),0 0 0 0.6px rgba(70,80,100,.55);"></div>
<div style="left:1355px;top:701px;width:15px;height:17px;background:linear-gradient(90deg,#cdcdcd,#f4f4f4 50%,#e9e9e9);border-radius:0 0 7px 7px;box-shadow:0 1px 1px rgba(0,0,0,.25);"></div>
<div style="left:1355px;top:718px;width:15px;height:31px;background:linear-gradient(90deg,#e2e2e2,#fbfbfb 50%,#eeeeee);"></div>
<div style="left:1356px;top:733px;width:14px;height:1px;background:#c4c4c4;"></div>
<svg style="left:1355px;top:718px" width="15" height="31"><polygon points="7.6,4 11.2,9.7 4,9.7" fill="#4f4b4d"/><polygon points="7.6,26.5 11.2,21 4,21" fill="#4f4b4d"/></svg>
<div style="left:1370px;top:0px;width:3px;height:784px;background:linear-gradient(90deg,#8c8c8c,#b9b9b9 40%,#c9c9c9);"></div>
<div style="left:1370px;top:0px;width:3px;height:6px;background:#666666;"></div>
<!-- bottom -->
<div style="left:0px;top:749px;width:1373px;height:35px;background:#e8e8e8;"></div>
<div style="left:0px;top:749px;width:1355px;height:1px;background:#9b9b9b;"></div>
<div style="left:0px;top:750px;width:64px;height:34px;background:linear-gradient(#b9b9b9 0,#dedede 3%,#ebebeb 6%,#ebebeb 86%,#f1f1f1 88%,#f3f3f3 100%);"></div>
<div style="left:3px;top:755px;width:57px;height:21px;background:#fff;box-sizing:border-box;border:1px solid #8a8a8a;border-radius:5.5px;box-shadow:0 1px 1.2px rgba(0,0,0,.3);background:linear-gradient(#ffffff,#fbfbfb 48%,#eeeeee 52%,#fdfdfd);"></div>
<div style="left:4px;top:756px;width:27.4px;height:19px;background:linear-gradient(#bcdcf7 0,#c8e5fa 42%,#8ecaf4 52%,#a5d9fa 75%,#caeffd 100%);border-radius:4.5px 0 0 4.5px;box-shadow:inset 0 1.2px 0 #0f3f9e, inset 1px 0 0 #3f78d0;"></div>
<div style="left:31px;top:756px;width:1px;height:19px;background:#8f8f8f;"></div>
<svg style="left:0px;top:750px" width="64" height="34" viewBox="0 750 64 34"><rect x="10.55" y="760.55" width="14.8" height="9.9" fill="#7d7d7d" stroke="#0a0a0a" stroke-width="1.1"/><rect x="11.30" y="762.00" width="1.9" height="1.9" fill="#86d2ff"/><rect x="11.30" y="764.98" width="1.9" height="1.9" fill="#86d2ff"/><rect x="11.30" y="767.96" width="1.9" height="1.9" fill="#86d2ff"/><rect x="14.27" y="762.00" width="1.9" height="1.9" fill="#86d2ff"/><rect x="14.27" y="764.98" width="1.9" height="1.9" fill="#86d2ff"/><rect x="14.27" y="767.96" width="1.9" height="1.9" fill="#86d2ff"/><rect x="17.24" y="762.00" width="1.9" height="1.9" fill="#86d2ff"/><rect x="17.24" y="764.98" width="1.9" height="1.9" fill="#86d2ff"/><rect x="17.24" y="767.96" width="1.9" height="1.9" fill="#86d2ff"/><rect x="20.21" y="762.00" width="1.9" height="1.9" fill="#86d2ff"/><rect x="20.21" y="764.98" width="1.9" height="1.9" fill="#86d2ff"/><rect x="20.21" y="767.96" width="1.9" height="1.9" fill="#86d2ff"/><rect x="23.18" y="762.00" width="1.9" height="1.9" fill="#86d2ff"/><rect x="23.18" y="764.98" width="1.9" height="1.9" fill="#86d2ff"/><rect x="23.18" y="767.96" width="1.9" height="1.9" fill="#86d2ff"/><rect x="35.65" y="760.55" width="7.7" height="9.9" fill="#ffffff" stroke="#0a0a0a" stroke-width="1.1"/><rect x="37.20" y="762.3" width="4.4" height="6.4" fill="#6e6e6e"/><rect x="38.00" y="763.00" width="1" height="0.95" fill="#ffffff"/><rect x="38.00" y="765.05" width="1" height="0.95" fill="#ffffff"/><rect x="38.00" y="767.10" width="1" height="0.95" fill="#ffffff"/><rect x="40.00" y="763.00" width="1" height="0.95" fill="#ffffff"/><rect x="40.00" y="765.05" width="1" height="0.95" fill="#ffffff"/><rect x="40.00" y="767.10" width="1" height="0.95" fill="#ffffff"/><rect x="45.70" y="760.55" width="7.7" height="9.9" fill="#ffffff" stroke="#0a0a0a" stroke-width="1.1"/><rect x="47.25" y="762.3" width="4.4" height="6.4" fill="#6e6e6e"/><rect x="48.05" y="763.00" width="1" height="0.95" fill="#ffffff"/><rect x="48.05" y="765.05" width="1" height="0.95" fill="#ffffff"/><rect x="48.05" y="767.10" width="1" height="0.95" fill="#ffffff"/><rect x="50.05" y="763.00" width="1" height="0.95" fill="#ffffff"/><rect x="50.05" y="765.05" width="1" height="0.95" fill="#ffffff"/><rect x="50.05" y="767.10" width="1" height="0.95" fill="#ffffff"/></svg>
<div style="left:64px;top:750px;width:67px;height:15px;background:linear-gradient(#d6d6d6 0,#e9e9e9 22%,#f4f4f4 50%,#e4e4e4 80%,#f8f8f8 100%);"></div>
<div style="left:64px;top:750px;width:1px;height:34px;background:#bdbdbd;"></div>
<svg style="left:64px;top:750px" width="67" height="16" viewBox="0 0 67 16"><g fill="#919191"><rect x="8.3" y="3.6" width="1.3" height="6.6"/><polygon points="16.6,3.6 16.6,10.2 10.6,6.9"/><polygon points="29.3,3.6 29.3,10.2 23.3,6.9"/><polygon points="38.8,3.6 38.8,10.2 44.8,6.9"/><polygon points="50.8,3.6 50.8,10.2 56.6,6.9"/><rect x="58" y="3.6" width="1.3" height="6.6"/></g></svg>
<div style="left:131px;top:750px;width:999px;height:17px;background:linear-gradient(#8797ae 0,#8e9eb6 18%,#8e9eb6 70%,#6f7c91 80%,#737f94 90%,#7c8799 100%);z-index:2;"></div>
<div style="left:131px;top:749px;width:999px;height:1px;background:#8a8a8a;"></div>
<div style="left:140px;top:750px;width:89px;height:13px;background:#ffffff;border-radius:0 0 7px 7px;z-index:50;box-sizing:border-box;border-right:1px solid #8b9098;border-bottom:1px solid #8b9098;border-left:1px solid #8b9098;box-shadow:0 1px 1.5px rgba(30,40,60,.55);"></div>
<span class="t v" style="top:748.75px;font-size:10.5px;line-height:15px;color:#000;font-weight:bold;left:-15.5px;width:400px;text-align:center;transform:scaleX(0.9);transform-origin:50% 0;z-index:50;letter-spacing:-0.3px;">Sample Month</span>
<div style="left:222px;top:750px;width:58.5px;height:13px;background:linear-gradient(#c9c9c9 0,#e3e3e3 18%,#ececec 45%,#e9e9e9 100%);border-radius:0 0 7px 7px;z-index:49;box-sizing:border-box;border-right:1px solid #8b9098;border-bottom:1px solid #8b9098;box-shadow:0 0.5px 1.5px rgba(30,40,60,.6), inset -1px 0 0 rgba(255,255,255,.5);"></div>
<span class="t v" style="top:748.75px;font-size:10.5px;line-height:15px;color:#000;left:52.25px;width:400px;text-align:center;transform:scaleX(0.9);transform-origin:50% 0;z-index:49;-webkit-text-stroke:0.2px #000;"><span class="l" style="font-size:11.2px">J</span>anuary</span>
<div style="left:273.5px;top:750px;width:62.8px;height:13px;background:linear-gradient(#c9c9c9 0,#e3e3e3 18%,#ececec 45%,#e9e9e9 100%);border-radius:0 0 7px 7px;z-index:48;box-sizing:border-box;border-right:1px solid #8b9098;border-bottom:1px solid #8b9098;box-shadow:0 0.5px 1.5px rgba(30,40,60,.6), inset -1px 0 0 rgba(255,255,255,.5);"></div>
<span class="t v" style="top:748.75px;font-size:10.5px;line-height:15px;color:#000;left:105.89999999999998px;width:400px;text-align:center;transform:scaleX(0.9);transform-origin:50% 0;z-index:48;-webkit-text-stroke:0.2px #000;">February</span>
<div style="left:329.3px;top:750px;width:58.0px;height:13px;background:linear-gradient(#c9c9c9 0,#e3e3e3 18%,#ececec 45%,#e9e9e9 100%);border-radius:0 0 7px 7px;z-index:47;box-sizing:border-box;border-right:1px solid #8b9098;border-bottom:1px solid #8b9098;box-shadow:0 0.5px 1.5px rgba(30,40,60,.6), inset -1px 0 0 rgba(255,255,255,.5);"></div>
<span class="t v" style="top:748.75px;font-size:10.5px;line-height:15px;color:#000;left:159.3px;width:400px;text-align:center;transform:scaleX(0.9);transform-origin:50% 0;z-index:47;-webkit-text-stroke:0.2px #000;">March</span>
<div style="left:380.3px;top:750px;width:57.9px;height:13px;background:linear-gradient(#c9c9c9 0,#e3e3e3 18%,#ececec 45%,#e9e9e9 100%);border-radius:0 0 7px 7px;z-index:46;box-sizing:border-box;border-right:1px solid #8b9098;border-bottom:1px solid #8b9098;box-shadow:0 0.5px 1.5px rgba(30,40,60,.6), inset -1px 0 0 rgba(255,255,255,.5);"></div>
<span class="t v" style="top:748.75px;font-size:10.5px;line-height:15px;color:#000;left:210.25px;width:400px;text-align:center;transform:scaleX(0.9);transform-origin:50% 0;z-index:46;-webkit-text-stroke:0.2px #000;">April</span>
<div style="left:431.2px;top:750px;width:58.5px;height:13px;background:linear-gradient(#c9c9c9 0,#e3e3e3 18%,#ececec 45%,#e9e9e9 100%);border-radius:0 0 7px 7px;z-index:45;box-sizing:border-box;border-right:1px solid #8b9098;border-bottom:1px solid #8b9098;box-shadow:0 0.5px 1.5px rgba(30,40,60,.6), inset -1px 0 0 rgba(255,255,255,.5);"></div>
<span class="t v" style="top:748.75px;font-size:10.5px;line-height:15px;color:#000;left:261.45px;width:400px;text-align:center;transform:scaleX(0.9);transform-origin:50% 0;z-index:45;-webkit-text-stroke:0.2px #000;">May</span>
<div style="left:482.7px;top:750px;width:57.5px;height:13px;background:linear-gradient(#c9c9c9 0,#e3e3e3 18%,#ececec 45%,#e9e9e9 100%);border-radius:0 0 7px 7px;z-index:44;box-sizing:border-box;border-right:1px solid #8b9098;border-bottom:1px solid #8b9098;box-shadow:0 0.5px 1.5px rgba(30,40,60,.6), inset -1px 0 0 rgba(255,255,255,.5);"></div>
<span class="t v" style="top:748.75px;font-size:10.5px;line-height:15px;color:#000;left:312.45000000000005px;width:400px;text-align:center;transform:scaleX(0.9);transform-origin:50% 0;z-index:44;-webkit-text-stroke:0.2px #000;"><span class="l" style="font-size:11.2px">J</span>une</span>
<div style="left:533.2px;top:750px;width:58.3px;height:13px;background:linear-gradient(#c9c9c9 0,#e3e3e3 18%,#ececec 45%,#e9e9e9 100%);border-radius:0 0 7px 7px;z-index:43;box-sizing:border-box;border-right:1px solid #8b9098;border-bottom:1px solid #8b9098;box-shadow:0 0.5px 1.5px rgba(30,40,60,.6), inset -1px 0 0 rgba(255,255,255,.5);"></div>
<span class="t v" style="top:748.75px;font-size:10.5px;line-height:15px;color:#000;left:363.35px;width:400px;text-align:center;transform:scaleX(0.9);transform-origin:50% 0;z-index:43;-webkit-text-stroke:0.2px #000;"><span class="l" style="font-size:11.2px">J</span>uly</span>
<div style="left:584.5px;top:750px;width:57.6px;height:13px;background:linear-gradient(#c9c9c9 0,#e3e3e3 18%,#ececec 45%,#e9e9e9 100%);border-radius:0 0 7px 7px;z-index:42;box-sizing:border-box;border-right:1px solid #8b9098;border-bottom:1px solid #8b9098;box-shadow:0 0.5px 1.5px rgba(30,40,60,.6), inset -1px 0 0 rgba(255,255,255,.5);"></div>
<span class="t v" style="top:748.75px;font-size:10.5px;line-height:15px;color:#000;left:414.29999999999995px;width:400px;text-align:center;transform:scaleX(0.9);transform-origin:50% 0;z-index:42;-webkit-text-stroke:0.2px #000;">August</span>
<div style="left:635.1px;top:750px;width:73.0px;height:13px;background:linear-gradient(#c9c9c9 0,#e3e3e3 18%,#ececec 45%,#e9e9e9 100%);border-radius:0 0 7px 7px;z-index:41;box-sizing:border-box;border-right:1px solid #8b9098;border-bottom:1px solid #8b9098;box-shadow:0 0.5px 1.5px rgba(30,40,60,.6), inset -1px 0 0 rgba(255,255,255,.5);"></div>
<span class="t v" style="top:748.75px;font-size:10.5px;line-height:15px;color:#000;left:472.6px;width:400px;text-align:center;transform:scaleX(0.9);transform-origin:50% 0;z-index:41;-webkit-text-stroke:0.2px #000;">September</span>
<div style="left:701.1px;top:750px;width:58.6px;height:13px;background:linear-gradient(#c9c9c9 0,#e3e3e3 18%,#ececec 45%,#e9e9e9 100%);border-radius:0 0 7px 7px;z-index:40;box-sizing:border-box;border-right:1px solid #8b9098;border-bottom:1px solid #8b9098;box-shadow:0 0.5px 1.5px rgba(30,40,60,.6), inset -1px 0 0 rgba(255,255,255,.5);"></div>
<span class="t v" style="top:748.75px;font-size:10.5px;line-height:15px;color:#000;left:531.4000000000001px;width:400px;text-align:center;transform:scaleX(0.9);transform-origin:50% 0;z-index:40;-webkit-text-stroke:0.2px #000;">October</span>
<div style="left:752.7px;top:750px;width:71.6px;height:13px;background:linear-gradient(#c9c9c9 0,#e3e3e3 18%,#ececec 45%,#e9e9e9 100%);border-radius:0 0 7px 7px;z-index:39;box-sizing:border-box;border-right:1px solid #8b9098;border-bottom:1px solid #8b9098;box-shadow:0 0.5px 1.5px rgba(30,40,60,.6), inset -1px 0 0 rgba(255,255,255,.5);"></div>
<span class="t v" style="top:748.75px;font-size:10.5px;line-height:15px;color:#000;left:589.5px;width:400px;text-align:center;transform:scaleX(0.9);transform-origin:50% 0;z-index:39;-webkit-text-stroke:0.2px #000;">November</span>
<div style="left:817.3px;top:750px;width:69.6px;height:13px;background:linear-gradient(#c9c9c9 0,#e3e3e3 18%,#ececec 45%,#e9e9e9 100%);border-radius:0 0 7px 7px;z-index:38;box-sizing:border-box;border-right:1px solid #8b9098;border-bottom:1px solid #8b9098;box-shadow:0 0.5px 1.5px rgba(30,40,60,.6), inset -1px 0 0 rgba(255,255,255,.5);"></div>
<span class="t v" style="top:748.75px;font-size:10.5px;line-height:15px;color:#000;left:653.0999999999999px;width:400px;text-align:center;transform:scaleX(0.9);transform-origin:50% 0;z-index:38;-webkit-text-stroke:0.2px #000;">December</span>
<div style="left:879.9px;top:750px;width:86.0px;height:13px;background:linear-gradient(#c9c9c9 0,#e3e3e3 18%,#ececec 45%,#e9e9e9 100%);border-radius:0 0 7px 7px;z-index:37;box-sizing:border-box;border-right:1px solid #8b9098;border-bottom:1px solid #8b9098;box-shadow:0 0.5px 1.5px rgba(30,40,60,.6), inset -1px 0 0 rgba(255,255,255,.5);"></div>
<span class="t v" style="top:748.75px;font-size:10.5px;line-height:15px;color:#000;left:723.9px;width:400px;text-align:center;transform:scaleX(0.9);transform-origin:50% 0;z-index:37;-webkit-text-stroke:0.2px #000;">Sample 2011</span>
<div style="left:958.9px;top:750px;width:57.3px;height:13px;background:linear-gradient(#c9c9c9 0,#e3e3e3 18%,#ececec 45%,#e9e9e9 100%);border-radius:0 0 7px 7px;z-index:36;box-sizing:border-box;border-right:1px solid #8b9098;border-bottom:1px solid #8b9098;box-shadow:0 0.5px 1.5px rgba(30,40,60,.6), inset -1px 0 0 rgba(255,255,255,.5);"></div>
<span class="t v" style="top:748.75px;font-size:10.5px;line-height:15px;color:#000;left:788.55px;width:400px;text-align:center;transform:scaleX(0.9);transform-origin:50% 0;z-index:36;-webkit-text-stroke:0.2px #000;">2011</span>
<div style="left:1009.2px;top:750px;width:70.9px;height:13px;background:linear-gradient(#c9c9c9 0,#e3e3e3 18%,#ececec 45%,#e9e9e9 100%);border-radius:0 0 7px 7px;z-index:35;box-sizing:border-box;border-right:1px solid #8b9098;border-bottom:1px solid #8b9098;box-shadow:0 0.5px 1.5px rgba(30,40,60,.6), inset -1px 0 0 rgba(255,255,255,.5);"></div>
<span class="t v" style="top:748.75px;font-size:10.5px;line-height:15px;color:#000;left:845.6500000000001px;width:400px;text-align:center;transform:scaleX(0.9);transform-origin:50% 0;z-index:35;-webkit-text-stroke:0.2px #000;">categories</span>
<div style="left:1073.1px;top:750px;width:24.9px;height:13px;background:linear-gradient(#c9c9c9 0,#e3e3e3 18%,#ececec 45%,#e9e9e9 100%);border-radius:0 0 7px 7px;z-index:34;box-sizing:border-box;border-right:1px solid #8b9098;border-bottom:1px solid #8b9098;box-shadow:0 0.5px 1.5px rgba(30,40,60,.6), inset -1px 0 0 rgba(255,255,255,.5);"></div>
<span class="t v" style="top:748.75px;font-size:10.5px;line-height:15px;color:#555;left:887.55px;width:400px;text-align:center;transform:scaleX(0.9);transform-origin:50% 0;z-index:34;">+</span>
<div style="left:1131px;top:750px;width:224px;height:16px;background:linear-gradient(#cfcfcf 0,#ececec 30%,#fbfbfb 65%,#f3f3f3 100%);"></div>
<div style="left:1131px;top:750px;width:3px;height:16px;background:linear-gradient(90deg,#6f6f6f,#d8d8d8);"></div>
<div style="left:1135px;top:750px;width:175px;height:15px;background:linear-gradient(#c6c6c6 0,#e6e6e6 30%,#fafafa 70%,#f0f0f0 100%);border-radius:0 7.5px 7.5px 0;box-shadow:1px 0 1px rgba(0,0,0,.2);"></div>
<div style="left:1141px;top:751px;width:82px;height:13px;background:linear-gradient(#3f78cf 0,#bfe0fb 18%,#8cbdf2 38%,#6eb0ee 55%,#a8dcfd 80%,#5e98de 100%);border-radius:6.5px;box-shadow:inset 0 0 0 1px rgba(40,90,180,.8),inset 3px 0 3px rgba(20,70,170,.5),inset -3px 0 3px rgba(20,70,170,.5);"></div>
<div style="left:1326px;top:751px;width:1px;height:14px;background:#c9c9c9;"></div>
<svg style="left:1310px;top:750px" width="32" height="16"><polygon points="5.2,7.6 11,4.6 11,10.6" fill="#4f4b4d"/><polygon points="27.6,7.6 22,4.6 22,10.6" fill="#4f4b4d"/></svg>
<div style="left:1342px;top:750px;width:13px;height:15px;background:linear-gradient(90deg,#7fb0ea,#c4e0fa 30%,#9cc6f2 50%,#c4e0fa 70%,#7fb0ea);box-sizing:border-box;border:1px solid #5a8fd6;"></div>
<div style="left:1348px;top:750px;width:1px;height:15px;background:#3a74c8;"></div>
<div style="left:1345px;top:753px;width:1px;height:9px;background:#eaf4ff;"></div>
<div style="left:1351px;top:753px;width:1px;height:9px;background:#eaf4ff;"></div>
<div style="left:1355px;top:750px;width:15px;height:16px;background:#ffffff;"></div>
<div style="left:1131px;top:765px;width:224px;height:1px;background:#8e8e8e;"></div>
<div style="left:65px;top:767px;width:1305px;height:17px;background:linear-gradient(#eeeeee 0,#e9e9e9 35%,#e1e1e1 55%,#ececec 75%,#fafafa 100%);"></div>
<div style="left:65px;top:765px;width:1290px;height:1px;background:#a2a2a2;"></div>
<div style="left:65px;top:766px;width:1290px;height:1px;background:#8c8c8c;"></div>
<div style="left:1355px;top:766px;width:15px;height:1px;background:#dcdcdc;"></div>
<div style="left:157px;top:767px;width:1px;height:17px;background:#b9b9b9;"></div>
<div style="left:158px;top:767px;width:1px;height:17px;background:#f9f9f9;"></div>
<div style="left:534px;top:767px;width:1px;height:17px;background:#b9b9b9;"></div>
<div style="left:535px;top:767px;width:1px;height:17px;background:#f9f9f9;"></div>
<div style="left:692px;top:767px;width:1px;height:17px;background:#b9b9b9;"></div>
<div style="left:693px;top:767px;width:1px;height:17px;background:#f9f9f9;"></div>
<div style="left:831px;top:767px;width:1px;height:17px;background:#b9b9b9;"></div>
<div style="left:832px;top:767px;width:1px;height:17px;background:#f9f9f9;"></div>
<div style="left:879px;top:767px;width:1px;height:17px;background:#b9b9b9;"></div>
<div style="left:880px;top:767px;width:1px;height:17px;background:#f9f9f9;"></div>
<div style="left:928px;top:767px;width:1px;height:17px;background:#b9b9b9;"></div>
<div style="left:929px;top:767px;width:1px;height:17px;background:#f9f9f9;"></div>
<div style="left:976px;top:767px;width:1px;height:17px;background:#b9b9b9;"></div>
<div style="left:977px;top:767px;width:1px;height:17px;background:#f9f9f9;"></div>
<div style="left:1011px;top:767px;width:1px;height:17px;background:#b9b9b9;"></div>
<div style="left:1012px;top:767px;width:1px;height:17px;background:#f9f9f9;"></div>
<div style="left:1046px;top:767px;width:1px;height:17px;background:#b9b9b9;"></div>
<div style="left:1047px;top:767px;width:1px;height:17px;background:#f9f9f9;"></div>
<div style="left:1074px;top:767px;width:1px;height:17px;background:#b9b9b9;"></div>
<div style="left:1075px;top:767px;width:1px;height:17px;background:#f9f9f9;"></div>
<span class="t v" style="top:769.25px;font-size:11px;line-height:15px;color:#4a7cab;left:68.5px;transform:scaleX(0.9);transform-origin:0 0;letter-spacing:-0.15px;-webkit-text-stroke:0.25px #4a7cab;">Normal View</span>
<span class="t v" style="top:767.75px;font-size:10.5px;line-height:15px;color:#111;left:164.2px;transform:scaleX(0.9);transform-origin:0 0;letter-spacing:-0.1px;-webkit-text-stroke:0.2px #111;">Ready</span>
<span class="t v" style="top:767.75px;font-size:10.5px;line-height:15px;color:#a9a9a9;left:695px;transform:scaleX(0.9);transform-origin:0 0;">Sum=0</span>
<div style="left:837px;top:771px;width:9px;height:9px;background:radial-gradient(circle at 50% 80%,#f0f0f0 0,#b4b4b4 45%,#6f6f6f 100%);border-radius:50%;box-shadow:inset 0 0 0 0.6px rgba(0,0,0,.4),0 1px 0 rgba(255,255,255,.8);"></div>
<div style="left:838.5px;top:775px;width:6px;height:1px;background:rgba(255,255,255,.75);"></div>
<span class="t v" style="top:767.75px;font-size:10.4px;line-height:15px;color:#555b69;left:850px;transform:scaleX(0.9);transform-origin:0 0;letter-spacing:-0.3px;-webkit-text-stroke:0.2px #555b69;">SCRL</span>
<div style="left:885px;top:771px;width:9px;height:9px;background:radial-gradient(circle at 50% 80%,#f0f0f0 0,#b4b4b4 45%,#6f6f6f 100%);border-radius:50%;box-shadow:inset 0 0 0 0.6px rgba(0,0,0,.4),0 1px 0 rgba(255,255,255,.8);"></div>
<div style="left:886.5px;top:775px;width:6px;height:1px;background:rgba(255,255,255,.75);"></div>
<span class="t v" style="top:767.75px;font-size:10.4px;line-height:15px;color:#555b69;left:898px;transform:scaleX(0.9);transform-origin:0 0;letter-spacing:-0.3px;-webkit-text-stroke:0.2px #555b69;">CAPS</span>
<div style="left:934px;top:771px;width:9px;height:9px;background:radial-gradient(circle at 50% 75%,#c9ecff 0,#4f9be6 45%,#1d5fc0 100%);border-radius:50%;box-shadow:inset 0 0 0 0.6px rgba(0,0,0,.4),0 1px 0 rgba(255,255,255,.8);"></div>
<div style="left:935.5px;top:775px;width:6px;height:1px;background:rgba(255,255,255,.75);"></div>
<span class="t v" style="top:767.75px;font-size:10.4px;line-height:15px;color:#555b69;left:947.4px;transform:scaleX(0.9);transform-origin:0 0;letter-spacing:-0.3px;-webkit-text-stroke:0.2px #555b69;">NUM</span>
<svg style="left:1355px;top:769px" width="15" height="15" viewBox="1355 769 15 15"><path d="M1358.6,782.8L1369.2,772.6M1362.8,782.8L1369.2,776.6M1366.8,782.6L1369.2,780.4" stroke="#5c5c5c" stroke-width="1.15" stroke-dasharray="1.2 0.5"/></svg>
<div style="left:1370px;top:749px;width:3px;height:35px;background:linear-gradient(90deg,#9a9a9a,#b6b6b6 40%,#bdbdbd);"></div>
<div style="left:1370px;top:765px;width:3px;height:8px;background:linear-gradient(#8a8a8a,#3c3c3c 30%,#4a4a4a 70%,#9a9a9a);"></div>
<div style="left:0px;top:784px;width:1373px;height:3px;background:#0c0c0c;"></div>
</div></body></html>
